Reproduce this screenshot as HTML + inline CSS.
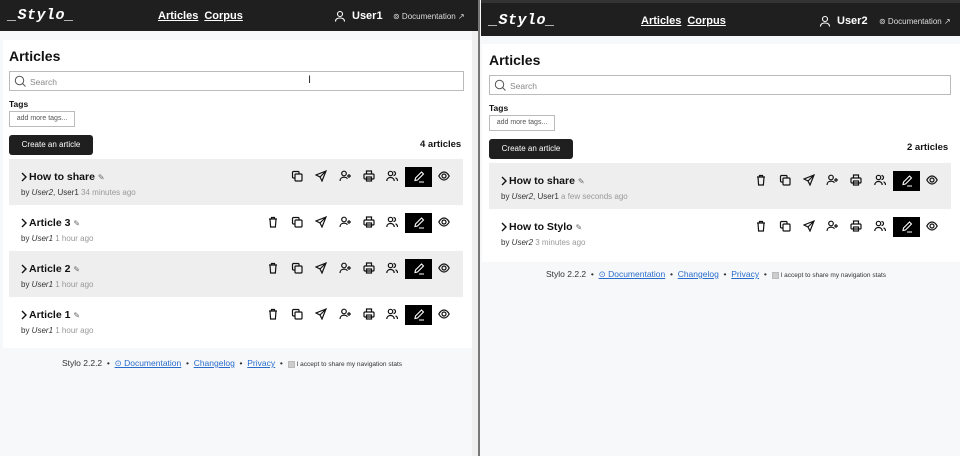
<!DOCTYPE html><html><head><meta charset="utf-8"><style>
*{box-sizing:border-box;margin:0;padding:0}
body{width:960px;height:456px;overflow:hidden;background:#f6f8fa;font-family:"Liberation Sans",sans-serif;position:relative;color:#111}
.pane{position:absolute;top:0;height:456px;background:#f6f8fa;overflow:hidden}
.hdr{position:absolute;left:0;right:0;background:#1f1f1f;color:#fff}
.logo{position:absolute;font-family:"Liberation Mono",monospace;font-weight:bold;font-style:italic;font-size:15px;letter-spacing:0.5px}
.nav{position:absolute;font-size:11px;font-weight:bold;text-decoration:underline}
.nav span{margin-right:6px}
.user{position:absolute;font-size:11px;font-weight:bold}
.doc{position:absolute;font-size:8px;color:#ddd}
.main{position:absolute;background:#fff}
h1{position:absolute;font-size:14px;font-weight:bold}
.search{position:absolute;height:20px;border:1px solid #bbb;font-size:8.5px;color:#888;padding:5px 0 0 20px}
.search svg{position:absolute;left:4px;top:3px}
.tags{position:absolute;font-size:8.5px;font-weight:bold}
.tagin{position:absolute;height:16px;width:66px;border:1px solid #bbb;font-size:7px;color:#555;text-align:center;line-height:14px}
.btn{position:absolute;height:20px;width:84px;background:#1f1f1f;border-radius:3px;color:#fff;font-size:8px;text-align:center;line-height:20px}
.count{position:absolute;font-size:9.5px;font-weight:bold}
.row{position:absolute;height:46px}
.row.g{background:#eeeeee}
.tt{position:absolute;left:11px;top:12px;font-size:10.5px;font-weight:bold}
.by{position:absolute;left:12px;top:29px;font-size:8px;color:#333}
.by i{font-style:italic}
.by .t{color:#999}
.ic{position:absolute;top:11px}
.pen{position:absolute;top:8px;width:27px;height:20px;background:#000}
.foot{position:absolute;font-size:8.5px;color:#333;white-space:nowrap}
.foot a{color:#2a6ccc;text-decoration:underline}
.foot small{font-size:6.5px}
.cb{display:inline-block;width:7px;height:7px;background:#ccc;border:1px solid #bbb;vertical-align:middle;margin-right:2px}
</style></head><body>
<svg width="0" height="0" style="position:absolute"><defs>
<g id="trash" fill="none" stroke="#111" stroke-width="1.2"><path d="M2 3h8M4.5 3V1.5h3V3M3 3l.6 8h4.8l.6-8"/></g>
<g id="copy" fill="none" stroke="#111" stroke-width="1.2"><rect x="4" y="4" width="7" height="7" rx="1"/><path d="M4 8H2.5a1 1 0 0 1-1-1V2.5a1 1 0 0 1 1-1H7a1 1 0 0 1 1 1V4"/></g>
<g id="send" fill="none" stroke="#111" stroke-width="1.2"><path d="M11 1L1 5l4 2 2 4zM5 7l6-6"/></g>
<g id="uadd" fill="none" stroke="#111" stroke-width="1.2"><circle cx="5" cy="3.5" r="2.3"/><path d="M1 11c0-2.5 1.8-3.8 4-3.8s3 .8 3.5 1.5M10 4v4M8 6h4"/></g>
<g id="print" fill="none" stroke="#111" stroke-width="1.2"><path d="M3.5 4V1h5v3"/><rect x="1" y="4" width="10" height="5" rx="1"/><rect x="3.5" y="7" width="5" height="4"/></g>
<g id="users" fill="none" stroke="#111" stroke-width="1.2"><circle cx="4.5" cy="3.5" r="2.2"/><path d="M.8 11c0-2.3 1.6-3.5 3.7-3.5s3.7 1.2 3.7 3.5M7.5 1.5a2 2 0 0 1 0 4M9.5 7.8c1.2.5 2 1.5 2 3.2"/></g>
<g id="pen" fill="none" stroke="#fff" stroke-width="1.1"><path d="M2 9.5l.5-2.5 6-6 2 2-6 6zM6 11h5"/></g>
<g id="eye" fill="none" stroke="#111" stroke-width="1.2"><path d="M.8 6C2.5 3 4.2 2 6 2s3.5 1 5.2 4C9.5 9 7.8 10 6 10S2.5 9 .8 6z"/><circle cx="6" cy="6" r="2"/></g>
<g id="chev" fill="none" stroke="#111" stroke-width="1.4"><path d="M2 1l4 4-4 4"/></g>
</defs></svg>

<!-- LEFT PANE -->
<div class="pane" style="left:0;width:472px">
<div class="hdr" style="top:0;height:31px">
<div class="logo" style="left:8px;top:7px">_Stylo_</div>
<div class="nav" style="left:158px;top:10px"><span>Articles</span><span>Corpus</span></div>
<svg style="position:absolute;left:334px;top:10px" width="12" height="12"><circle cx="6" cy="4" r="2.5" fill="none" stroke="#fff" stroke-width="1.1"/><path d="M1.5 11.5c0-2.5 2-3.5 4.5-3.5s4.5 1 4.5 3.5" fill="none" stroke="#fff" stroke-width="1.1"/></svg>
<div class="user" style="left:352px;top:10px">User1</div>
<div class="doc" style="left:393px;top:12px">⊚ Documentation ↗</div>
</div>
<div class="main" style="left:3px;top:40px;width:469px;height:308px"></div>
<h1 style="left:9px;top:48px">Articles</h1>
<div class="search" style="left:9px;top:71px;width:455px"><svg width="12" height="12"><circle cx="5.5" cy="5.5" r="4.2" fill="none" stroke="#555" stroke-width="1"/><path d="M8.5 8.5l3 3" stroke="#555"/></svg>Search</div>
<div style="position:absolute;left:308px;top:74px;font-size:11px;color:#333">I</div>
<div class="tags" style="left:9px;top:99px">Tags</div>
<div class="tagin" style="left:9px;top:111px">add more tags...</div>
<div class="btn" style="left:9px;top:135px">Create an article</div>
<div class="count" style="left:420px;top:139px">4 articles</div>

<div class="row g" style="left:9px;top:159px;width:454px"><svg class="ic" style="left:11px;top:13px" width="8" height="10"><use href="#chev"/></svg><div class="tt" style="left:20px">How to share <span style="font-weight:normal;font-size:8px;color:#666">✎</span></div><div class="by">by <i>User2</i>, User1 <span class="t">34 minutes ago</span></div>
<svg class="ic" style="left:282px" width="12" height="12"><use href="#copy"/></svg><svg class="ic" style="left:306px" width="12" height="12"><use href="#send"/></svg><svg class="ic" style="left:330px" width="12" height="12"><use href="#uadd"/></svg><svg class="ic" style="left:354px" width="12" height="12"><use href="#print"/></svg><svg class="ic" style="left:377px" width="12" height="12"><use href="#users"/></svg><div class="pen" style="left:396px"><svg style="position:absolute;left:8px;top:4px" width="12" height="12"><use href="#pen"/></svg></div><svg class="ic" style="left:429px" width="12" height="12"><use href="#eye"/></svg></div>

<div class="row" style="left:9px;top:205px;width:454px;background:#fff"><svg class="ic" style="left:11px;top:13px" width="8" height="10"><use href="#chev"/></svg><div class="tt" style="left:20px">Article 3 <span style="font-weight:normal;font-size:8px;color:#666">✎</span></div><div class="by">by <i>User1</i> <span class="t">1 hour ago</span></div>
<svg class="ic" style="left:258px" width="12" height="12"><use href="#trash"/></svg><svg class="ic" style="left:282px" width="12" height="12"><use href="#copy"/></svg><svg class="ic" style="left:306px" width="12" height="12"><use href="#send"/></svg><svg class="ic" style="left:330px" width="12" height="12"><use href="#uadd"/></svg><svg class="ic" style="left:354px" width="12" height="12"><use href="#print"/></svg><svg class="ic" style="left:377px" width="12" height="12"><use href="#users"/></svg><div class="pen" style="left:396px"><svg style="position:absolute;left:8px;top:4px" width="12" height="12"><use href="#pen"/></svg></div><svg class="ic" style="left:429px" width="12" height="12"><use href="#eye"/></svg></div>

<div class="row g" style="left:9px;top:251px;width:454px"><svg class="ic" style="left:11px;top:13px" width="8" height="10"><use href="#chev"/></svg><div class="tt" style="left:20px">Article 2 <span style="font-weight:normal;font-size:8px;color:#666">✎</span></div><div class="by">by <i>User1</i> <span class="t">1 hour ago</span></div>
<svg class="ic" style="left:258px" width="12" height="12"><use href="#trash"/></svg><svg class="ic" style="left:282px" width="12" height="12"><use href="#copy"/></svg><svg class="ic" style="left:306px" width="12" height="12"><use href="#send"/></svg><svg class="ic" style="left:330px" width="12" height="12"><use href="#uadd"/></svg><svg class="ic" style="left:354px" width="12" height="12"><use href="#print"/></svg><svg class="ic" style="left:377px" width="12" height="12"><use href="#users"/></svg><div class="pen" style="left:396px"><svg style="position:absolute;left:8px;top:4px" width="12" height="12"><use href="#pen"/></svg></div><svg class="ic" style="left:429px" width="12" height="12"><use href="#eye"/></svg></div>

<div class="row" style="left:9px;top:297px;width:454px;background:#fff"><svg class="ic" style="left:11px;top:13px" width="8" height="10"><use href="#chev"/></svg><div class="tt" style="left:20px">Article 1 <span style="font-weight:normal;font-size:8px;color:#666">✎</span></div><div class="by">by <i>User1</i> <span class="t">1 hour ago</span></div>
<svg class="ic" style="left:258px" width="12" height="12"><use href="#trash"/></svg><svg class="ic" style="left:282px" width="12" height="12"><use href="#copy"/></svg><svg class="ic" style="left:306px" width="12" height="12"><use href="#send"/></svg><svg class="ic" style="left:330px" width="12" height="12"><use href="#uadd"/></svg><svg class="ic" style="left:354px" width="12" height="12"><use href="#print"/></svg><svg class="ic" style="left:377px" width="12" height="12"><use href="#users"/></svg><div class="pen" style="left:396px"><svg style="position:absolute;left:8px;top:4px" width="12" height="12"><use href="#pen"/></svg></div><svg class="ic" style="left:429px" width="12" height="12"><use href="#eye"/></svg></div>

<div class="foot" style="left:62px;top:358px">Stylo 2.2.2 &nbsp;•&nbsp; <a>⊙ Documentation</a> &nbsp;•&nbsp; <a>Changelog</a> &nbsp;•&nbsp; <a>Privacy</a> &nbsp;•&nbsp; <small><span class="cb"></span>I accept to share my navigation stats</small></div>
</div>
<div style="position:absolute;left:472px;top:0;width:6px;height:456px;background:#efefef"></div>
<div style="position:absolute;left:472px;top:0;width:6px;height:31px;background:#1f1f1f"></div>
<div style="position:absolute;left:478px;top:0;width:2px;height:456px;background:#777"></div>

<!-- RIGHT PANE -->
<div class="pane" style="left:481px;width:479px">
<div class="hdr" style="top:0;height:3px;background:#333"></div>
<div class="hdr" style="top:3px;height:33px">
<div class="logo" style="left:8px;top:9px">_Stylo_</div>
<div class="nav" style="left:160px;top:12px"><span>Articles</span><span>Corpus</span></div>
<svg style="position:absolute;left:338px;top:12px" width="12" height="12"><circle cx="6" cy="4" r="2.5" fill="none" stroke="#fff" stroke-width="1.1"/><path d="M1.5 11.5c0-2.5 2-3.5 4.5-3.5s4.5 1 4.5 3.5" fill="none" stroke="#fff" stroke-width="1.1"/></svg>
<div class="user" style="left:356px;top:12px">User2</div>
<div class="doc" style="left:398px;top:14px">⊚ Documentation ↗</div>
</div>
<div class="main" style="left:1px;top:44px;width:478px;height:218px"></div>
<h1 style="left:8px;top:52px">Articles</h1>
<div class="search" style="left:8px;top:75px;width:462px"><svg width="12" height="12"><circle cx="5.5" cy="5.5" r="4.2" fill="none" stroke="#555" stroke-width="1"/><path d="M8.5 8.5l3 3" stroke="#555"/></svg>Search</div>
<div class="tags" style="left:8px;top:103px">Tags</div>
<div class="tagin" style="left:8px;top:115px">add more tags...</div>
<div class="btn" style="left:8px;top:139px">Create an article</div>
<div class="count" style="left:426px;top:142px">2 articles</div>

<div class="row g" style="left:8px;top:163px;width:462px"><svg class="ic" style="left:11px;top:13px" width="8" height="10"><use href="#chev"/></svg><div class="tt" style="left:20px">How to share <span style="font-weight:normal;font-size:8px;color:#666">✎</span></div><div class="by">by <i>User2</i>, User1 <span class="t">a few seconds ago</span></div>
<svg class="ic" style="left:266px" width="12" height="12"><use href="#trash"/></svg><svg class="ic" style="left:290px" width="12" height="12"><use href="#copy"/></svg><svg class="ic" style="left:314px" width="12" height="12"><use href="#send"/></svg><svg class="ic" style="left:337px" width="12" height="12"><use href="#uadd"/></svg><svg class="ic" style="left:361px" width="12" height="12"><use href="#print"/></svg><svg class="ic" style="left:385px" width="12" height="12"><use href="#users"/></svg><div class="pen" style="left:404px"><svg style="position:absolute;left:8px;top:4px" width="12" height="12"><use href="#pen"/></svg></div><svg class="ic" style="left:437px" width="12" height="12"><use href="#eye"/></svg></div>

<div class="row" style="left:8px;top:209px;width:462px;background:#fff"><svg class="ic" style="left:11px;top:13px" width="8" height="10"><use href="#chev"/></svg><div class="tt" style="left:20px">How to Stylo <span style="font-weight:normal;font-size:8px;color:#666">✎</span></div><div class="by">by <i>User2</i> <span class="t">3 minutes ago</span></div>
<svg class="ic" style="left:266px" width="12" height="12"><use href="#trash"/></svg><svg class="ic" style="left:290px" width="12" height="12"><use href="#copy"/></svg><svg class="ic" style="left:314px" width="12" height="12"><use href="#send"/></svg><svg class="ic" style="left:337px" width="12" height="12"><use href="#uadd"/></svg><svg class="ic" style="left:361px" width="12" height="12"><use href="#print"/></svg><svg class="ic" style="left:385px" width="12" height="12"><use href="#users"/></svg><div class="pen" style="left:404px"><svg style="position:absolute;left:8px;top:4px" width="12" height="12"><use href="#pen"/></svg></div><svg class="ic" style="left:437px" width="12" height="12"><use href="#eye"/></svg></div>

<div class="foot" style="left:65px;top:269px">Stylo 2.2.2 &nbsp;•&nbsp; <a>⊙ Documentation</a> &nbsp;•&nbsp; <a>Changelog</a> &nbsp;•&nbsp; <a>Privacy</a> &nbsp;•&nbsp; <small><span class="cb"></span>I accept to share my navigation stats</small></div>
</div>
</body></html>
